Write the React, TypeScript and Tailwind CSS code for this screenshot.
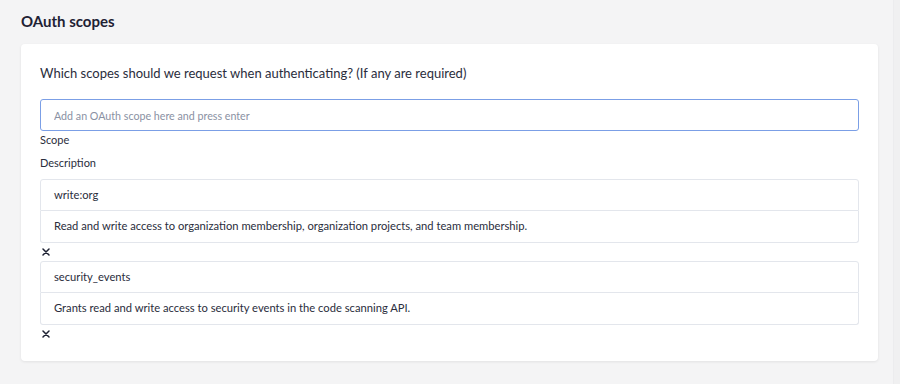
import React from 'react';

interface Scope {
  name: string;
  description: string;
}

const scopes: Scope[] = [
  {
    name: 'write:org',
    description: 'Read and write access to organization membership, organization projects, and team membership.',
  },
  {
    name: 'security_events',
    description: 'Grants read and write access to security events in the code scanning API.',
  },
];

const ScopeRow: React.FC<{ scope: Scope }> = ({ scope }) => (
  <div className="flex flex-col">
    <div className="h-[32px] flex items-center px-[13px] border border-[#e3e6ec] rounded-t-[3px] text-[11.2px] text-[#2a2d3c] bg-white">
      {scope.name}
    </div>
    <div className="h-[32px] flex items-center px-[13px] border border-t-0 border-[#e3e6ec] rounded-b-[3px] text-[11.2px] text-[#2a2d3c] bg-white">
      {scope.description}
    </div>
    <button className="self-start mt-[2px] mb-[1px] ml-[1px] h-[14px] w-[10px] flex items-center justify-center text-[#1e2133]" aria-label="Remove scope">
      <svg width="8" height="8" viewBox="0 0 8 8" fill="none">
        <path d="M1 1L7 7M7 1L1 7" stroke="currentColor" strokeWidth="1.5" strokeLinecap="round" />
      </svg>
    </button>
  </div>
);

const App: React.FC = () => {
  return (
    <div className="w-[900px] h-[384px] bg-[#f4f4f5] flex font-['Lato',sans-serif] text-[#1e2133] overflow-hidden">
      <div className="w-[893px] flex flex-col pl-[21px] pr-[15px]">
        <h2 className="h-[44px] flex items-center pb-[1px] text-[15px] font-bold text-[#1e2133]">OAuth scopes</h2>
        <div className="bg-white rounded-[4px] shadow-[0_1px_3px_rgba(0,0,0,0.08)] px-[19px] pt-[20px] pb-[19px]">
          <p className="text-[13px] leading-[18px] text-[#2a2d3c]">
            Which scopes should we request when authenticating? (If any are required)
          </p>
          <input
            className="mt-[17px] w-full h-[32px] px-[13px] rounded-[3px] border border-[#7b9fe6] text-[10.7px] outline-none placeholder:text-[#8a91a3]"
            placeholder="Add an OAuth scope here and press enter"
          />
          <div className="mt-[1px] text-[11px] leading-[16px] text-[#2a2d3c]">Scope</div>
          <div className="mt-[7px] text-[11px] leading-[16px] text-[#2a2d3c]">Description</div>
          <div className="mt-[8px] flex flex-col gap-[1px]">
            {scopes.map((s) => (
              <ScopeRow key={s.name} scope={s} />
            ))}
          </div>
        </div>
      </div>
      <div className="flex-1 bg-[#f0f0f1] border-l border-[#ececee]" />
    </div>
  );
};

export default App;
